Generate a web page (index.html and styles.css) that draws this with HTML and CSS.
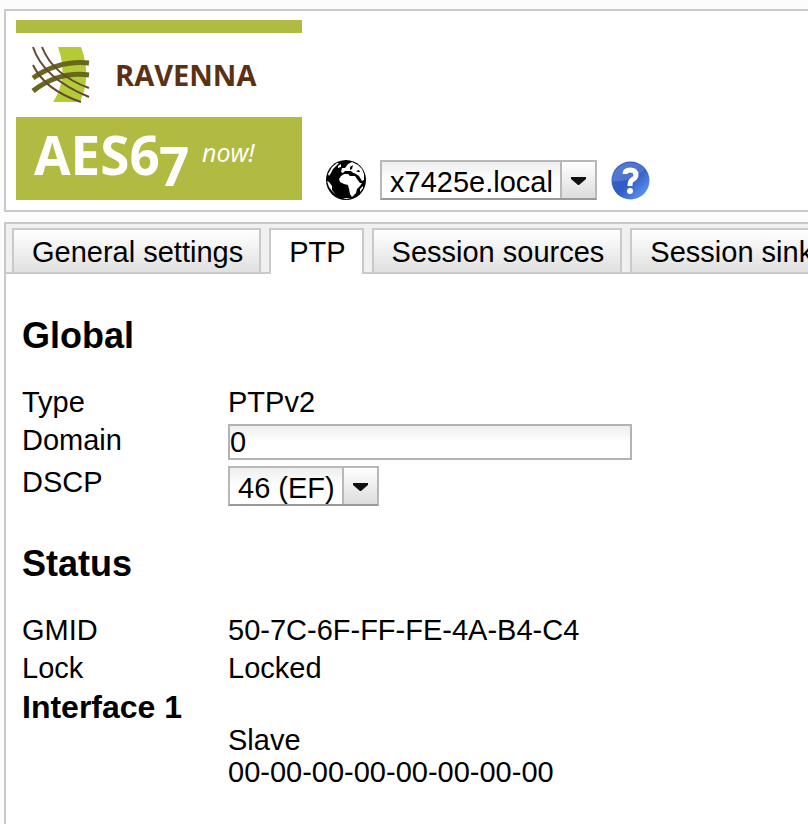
FILE: index.html
```html
<!DOCTYPE html>
<html lang="en">
<head>
  <meta charset="UTF-8" />
  <meta name="viewport" content="width=device-width, initial-scale=1.0" />
  <title>RAVENNA - PTP</title>
  <link rel="stylesheet" href="styles.css">
</head>
<body>
  <div class="page">
    <header class="header">
      <svg class="logo" viewBox="0 0 286 180" role="img" aria-label="RAVENNA AES67 now!">
        <rect width="286" height="180" fill="#fff" />
        <rect width="286" height="13" fill="#b1bb42" />
        <rect y="97" width="286" height="83" fill="#b1bb42" />
        <path d="M42 27H65Q76 56 64 82H37Q53 58 42 27Z" fill="#b5cb35" />
        <g fill="none" stroke="#67681c" stroke-width="5">
          <path d="M17 58Q43 40 73 43" />
          <path d="M17 71Q43 51 73 55" />
        </g>
        <g fill="none" stroke="#674634" stroke-width="2">
          <path d="M17 27Q27 58 73 77" />
          <path d="M26 27Q37 55 73 68" />
          <path d="M17 45Q29 70 65 82" />
        </g>
        <text class="logo-name" x="99" y="66">RAVENNA</text>
        <text class="logo-aes" x="18" y="155">AES6</text>
        <text class="logo-aes" x="143" y="166">7</text>
        <text class="logo-now" x="186" y="142">now!</text>
      </svg>

      <svg class="globe" viewBox="0 0 40 40" aria-hidden="true">
        <circle cx="20" cy="20" r="20" fill="#000" />
        <g fill="#fff">
          <path d="M13 19L15 16L18 14L22 14L24 16L29 16L31 19L34 23L36 23L34 26L31 29L30 33L26 37L24 34L23 29L22 25L18 24L14 22Z" />
          <path d="M15 12L16 8L19 8L22 4L26 2L32 5L36 9L38 14L38 20L36 21L33 16L30 14L27 13L25 11L22 11L19 11L17 13Z" />
          <path d="M2 14L6 7L11 3L13 3L10 6L7 9L5 13L3 16Z" />
          <path d="M1 21L3 22L6 26L6 30L10 35L6 31L3 27Z" />
          <path d="M37 26L37 28L34 32L34 29ZM12 6L15 4L15 7L12 8ZM17 38L25 38L20 39Z" />
        </g>
        <path d="M24 7L27 5L26 9L24 10ZM30 11L33 10L34 12L32 12ZM24 12L28 13L30 15L26 14Z" fill="#000" />
      </svg>

      <div class="select-box">
        <select class="select" id="device" aria-label="Device">
          <option>x7425e.local</option>
        </select>
        <svg class="arrow" viewBox="0 0 33 36" aria-hidden="true">
          <path d="M9 15H24V17L17 23H16L9 17Z" fill="#111" />
        </svg>
      </div>

      <button type="button" class="help" aria-label="Help">
        <svg viewBox="0 0 39 39" aria-hidden="true">
          <defs>
            <linearGradient id="help-fill" x1="0" y1="0" x2="1" y2="1">
              <stop offset="0" stop-color="#3c68cd" />
              <stop offset="0.5" stop-color="#315bc5" />
              <stop offset="1" stop-color="#6ba6f5" />
            </linearGradient>
          </defs>
          <circle cx="19.5" cy="19.5" r="19" fill="url(#help-fill)" />
          <path d="M1 20C12 21 26 17 34 8A19 19 0 0 0 1 20Z" fill="#fff" opacity="0.14" />
          <path d="M14 13Q14 9 19 9Q25 9 25 14Q25 17 21 19Q19 20 19 25" fill="none" stroke="#fff" stroke-width="5" />
          <circle cx="19" cy="30" r="3" fill="#fff" />
        </svg>
      </button>
    </header>

    <main class="panel">
      <nav class="tabs">
        <button type="button" class="tab">General settings</button>
        <button type="button" class="tab active">PTP</button>
        <button type="button" class="tab">Session sources</button>
        <button type="button" class="tab">Session sinks</button>
      </nav>

      <div class="content">
        <h2>Global</h2>
        <div class="fields">
          <span>Type</span>
          <span>PTPv2</span>
          <label for="domain">Domain</label>
          <input type="text" id="domain" class="text-input" value="0" />
          <label for="dscp">DSCP</label>
          <div class="select-box">
            <select class="select" id="dscp">
              <option>46 (EF)</option>
            </select>
            <svg class="arrow" viewBox="0 0 33 36" aria-hidden="true">
              <path d="M9 15H24V17L17 23H16L9 17Z" fill="#111" />
            </svg>
          </div>
        </div>

        <h2>Status</h2>
        <div class="fields">
          <span>GMID</span>
          <span>50-7C-6F-FF-FE-4A-B4-C4</span>
          <span>Lock</span>
          <span>Locked</span>
          <h3>Interface 1</h3>
          <div class="interface">
            <div>Slave</div>
            <div>00-00-00-00-00-00-00-00</div>
          </div>
        </div>
      </div>
    </main>
  </div>
</body>
</html>
```

FILE: styles.css
```css
* {
  box-sizing: border-box;
}

html {
  overflow: hidden;
}

body {
  margin: 0;
  background: #fcfcfc;
  color: #000;
  font-family: "Liberation Sans", Arial, sans-serif;
  font-size: 29px;
  line-height: 32px;
}

button,
input,
select {
  font: inherit;
  color: inherit;
}

/* the page is as wide as its tabs */
.page {
  display: flex;
  flex-direction: column;
  gap: 10px;
  width: max-content;
  min-width: 100%;
  min-height: 100vh;
  padding: 9px 4px 0;
}

.header {
  display: flex;
  align-items: flex-end;
  gap: 14px;
  padding: 9px 10px 10px;
  border: 2px solid #c9c9c9;
  background: #fff;
}

.logo {
  width: 286px;
  height: 180px;
  margin-right: 10px;
}

.logo-name {
  font: bold 29px "Open Sans", sans-serif;
  fill: #5c3013;
}

.logo-aes {
  font: bold 53px "Open Sans", sans-serif;
  fill: #fff;
}

.logo-now {
  font: italic 25px "Open Sans", sans-serif;
  fill: #fff;
}

.globe {
  width: 40px;
  height: 40px;
}

.help {
  width: 39px;
  height: 39px;
  padding: 0;
  border: none;
  background: none;
  cursor: pointer;
}

.help svg {
  display: block;
}

/* select with its own arrow button */
.select-box {
  display: inline-grid;
  justify-self: start;
}

.select {
  grid-area: 1 / 1;
  appearance: none;
  height: 40px;
  padding: 3px 42px 0 8px;
  border: 2px solid #b8b8b8;
  border-bottom-color: #999;
  border-radius: 0;
  background: linear-gradient(#eee, #fff 50%);
}

.arrow {
  grid-area: 1 / 1;
  justify-self: end;
  width: 35px;
  height: 36px;
  margin: 2px 2px 0 0;
  border-left: 2px solid #b8b8b8;
  background: linear-gradient(#fff, #ddd);
  pointer-events: none;
}

.panel {
  flex: 1;
  border: 2px solid #c9c9c9;
  border-bottom: none;
  background: #fff;
}

.tabs {
  display: flex;
  gap: 8px;
  padding: 4px 6px 0;
  border-bottom: 2px solid #c9c9c9;
  background: #f0f0f0;
}

.tab {
  height: 44px;
  padding: 2px 16px 0 18px;
  border: 2px solid #c9c9c9;
  border-bottom: none;
  background: linear-gradient(#fff, #e0e0e0);
  white-space: nowrap;
  cursor: pointer;
}

.tab.active {
  height: 46px;
  margin-bottom: -2px;
  padding-bottom: 2px;
  background: #fff;
}

.content {
  padding: 42px 16px 36px;
}

h2 {
  margin: 0 0 30px;
  font-size: 36px;
  line-height: 40px;
}

.fields + h2 {
  margin-top: 38px;
}

.fields {
  display: grid;
  grid-template-columns: 200px 1fr;
  gap: 6px;
}

.text-input {
  width: 100%;
  max-width: 404px;
  height: 36px;
  padding: 0;
  border: 2px solid #b3b3b3;
  background: linear-gradient(#eee, #fff 50%);
}

h3 {
  grid-column: 1 / -1;
  margin: 0 0 -6px;
  font-size: 32px;
  line-height: 34px;
}

.interface {
  grid-column: 2;
}
```
